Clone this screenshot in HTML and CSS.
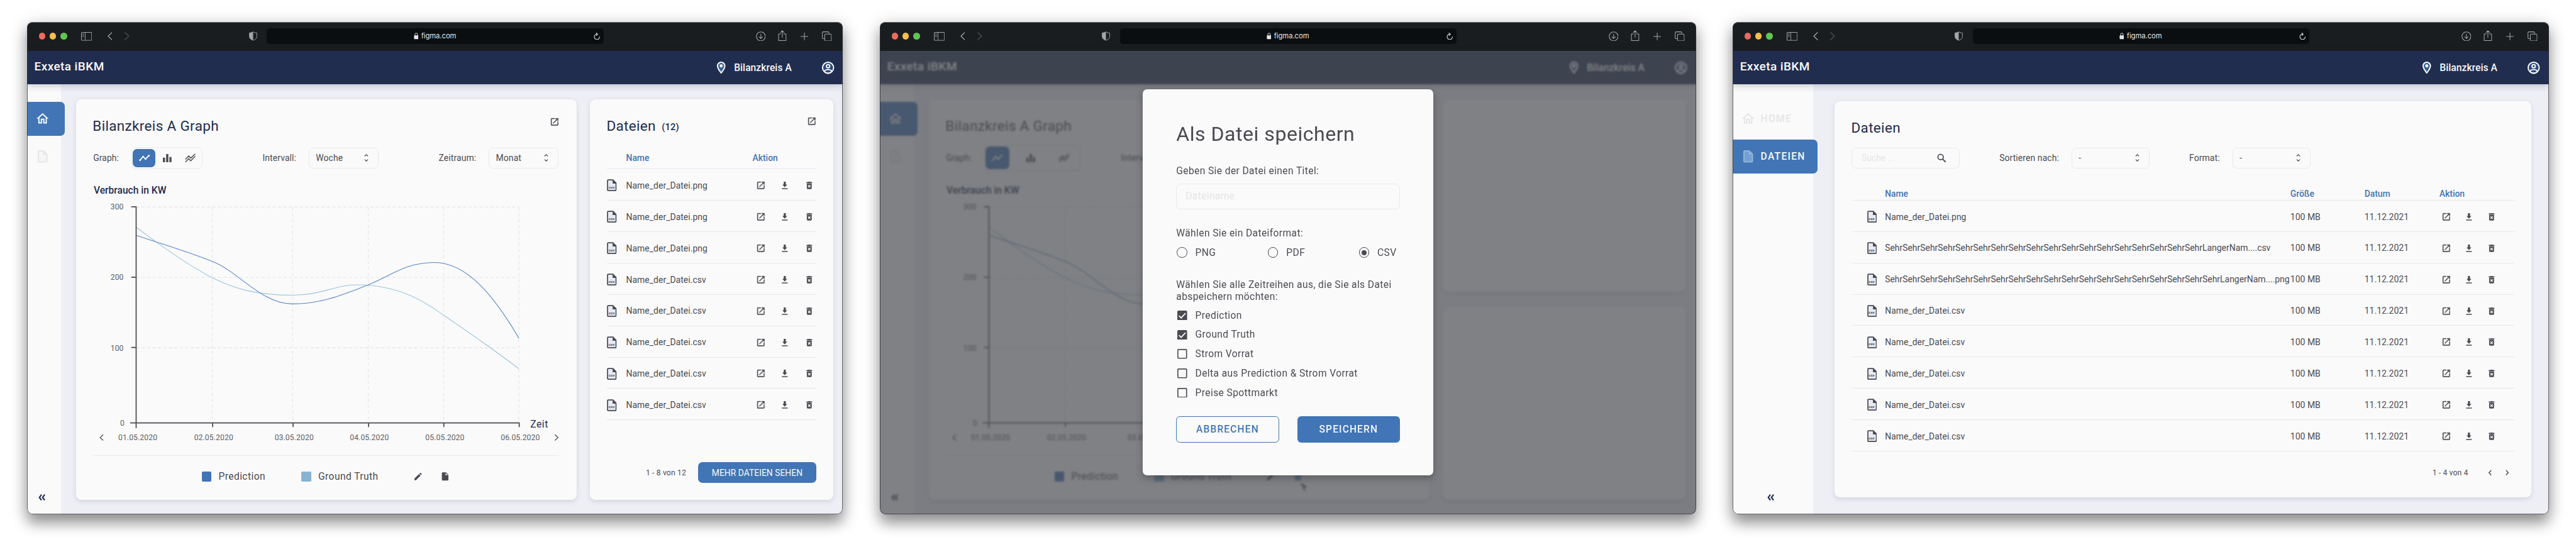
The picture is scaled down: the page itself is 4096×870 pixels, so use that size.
FILE: index.html
```html
<!DOCTYPE html>
<html lang="de">
<head>
<meta charset="utf-8">
<title>Exxeta iBKM</title>
<link rel="stylesheet" href="styles.css">
</head>
<body>
<svg class="sprite" aria-hidden="true">
  <symbol id="i-sidebar" viewBox="0 0 20 16"><rect x=".6" y=".6" width="18.8" height="14.8" rx="1.6" fill="none" stroke="currentColor" stroke-width="1.2"/><path d="M7.5 .6v14.8M2.4 3.6h3M2.4 6h3M2.4 8.4h3" fill="none" stroke="currentColor" stroke-width="1"/></symbol>
  <symbol id="i-back" viewBox="0 0 9 15"><path d="M8 .8L1.2 7.5L8 14.2" fill="none" stroke="currentColor" stroke-width="1.5" stroke-linecap="round" stroke-linejoin="round"/></symbol>
  <symbol id="i-fwd" viewBox="0 0 9 15"><path d="M1 .8L7.8 7.5L1 14.2" fill="none" stroke="currentColor" stroke-width="1.5" stroke-linecap="round" stroke-linejoin="round"/></symbol>
  <symbol id="i-prev" viewBox="0 0 8 11"><path d="M6 1L2 5.5L6 10" fill="none" stroke="currentColor" stroke-width="1.7"/></symbol>
  <symbol id="i-next" viewBox="0 0 8 11"><path d="M2 1L6 5.5L2 10" fill="none" stroke="currentColor" stroke-width="1.7"/></symbol>
  <symbol id="i-shield" viewBox="0 0 15 17"><path d="M7.5 .7C9.5 2 12 2.6 14.3 2.8V9.500C14.300 13 11 15.200 7.500 16.400C4 15.200 .7 13 .7 9.500V2.800C3 2.600 5.500 2 7.500 .7Z" fill="none" stroke="currentColor" stroke-width="1.1"/><path d="M7.500 .7C5.500 2 3 2.600 .7 2.800V9.500C.7 13 4 15.200 7.500 16.400Z" fill="currentColor"/></symbol>
  <symbol id="i-lock" viewBox="0 0 9 12"><rect x=".4" y="5" width="8.200" height="7" rx="1.300" fill="currentColor"/><path d="M2.200 5.500V3.200a2.300 2.400 0 0 1 4.600 0V5.500" fill="none" stroke="currentColor" stroke-width="1.100"/></symbol>
  <symbol id="i-reload" viewBox="0 0 12 13"><path d="M10.900 7.500A4.900 4.900 0 1 1 6.500 2.700M4.600 .5L7.200 2.700L5 5.200" fill="none" stroke="currentColor" stroke-width="1.200" stroke-linecap="round" stroke-linejoin="round"/></symbol>
  <symbol id="i-dl-circle" viewBox="0 0 18 18"><circle cx="9" cy="9" r="8.200" fill="none" stroke="currentColor" stroke-width="1.200"/><path d="M9 4.800V12.800M5.900 9.900L9 13L12.100 9.900" fill="none" stroke="currentColor" stroke-width="1.200" stroke-linecap="round"/></symbol>
  <symbol id="i-share" viewBox="0 0 16 20"><path d="M5 7H1.200V19H14.800V7H11M8 13V1.200M4.600 4.400L8 1L11.400 4.400" fill="none" stroke="currentColor" stroke-width="1.200" stroke-linecap="round" stroke-linejoin="round"/></symbol>
  <symbol id="i-plus" viewBox="0 0 14 14"><path d="M7 .5V13.500M.5 7H13.500" stroke="currentColor" stroke-width="1.200" stroke-linecap="round"/></symbol>
  <symbol id="i-copy" viewBox="0 0 18 18"><path d="M5 13.200H2.600A2 2 0 0 1 .7 11.200V2.700A2 2 0 0 1 2.700 .7H10.800A2 2 0 0 1 12.800 2.700V4.400" fill="none" stroke="currentColor" stroke-width="1.200"/><rect x="5" y="4.800" width="12.300" height="12.500" rx="2" fill="none" stroke="currentColor" stroke-width="1.200"/></symbol>
  <symbol id="i-pin" viewBox="0 0 24 24"><path d="M12 2C8.130 2 5 5.130 5 9c0 5.250 7 13 7 13s7-7.750 7-13c0-3.870-3.130-7-7-7z" fill="currentColor"/><path d="M12 4c2.760 0 5 2.240 5 5 0 2.880-2.880 7.190-5 9.880C9.920 16.210 7 11.850 7 9c0-2.760 2.240-5 5-5z" fill="#3f6491"/><circle cx="12" cy="9" r="2.500" fill="currentColor"/></symbol>
  <symbol id="i-user" viewBox="0 0 24 24"><circle cx="12" cy="12" r="9" fill="#2c4a7c" stroke="currentColor" stroke-width="2"/><circle cx="12" cy="9.500" r="2.700" fill="none" stroke="currentColor" stroke-width="2"/><path d="M5.500 17.800C7.500 15.500 10 15 12 15S16.500 15.500 18.500 17.800C17 20 14.500 21 12 21S7 20 5.500 17.800Z" fill="none" stroke="currentColor" stroke-width="1.900"/></symbol>
  <symbol id="i-home" viewBox="0 0 24 24"><path d="M12 3L2 12h3v8h6v-6h2v6h6v-8h3L12 3zm5 15h-2v-6H9v6H7v-7.810l5-4.500 5 4.500V18z" fill="currentColor"/></symbol>
  <symbol id="i-doc" viewBox="0 0 24 24"><path d="M14 2H6c-1.100 0-2 .9-2 2v16c0 1.100.9 2 2 2h12c1.100 0 2-.9 2-2V8l-6-6z" fill="currentColor"/><path d="M6 4h7v5h5v11H6z" fill="var(--doc-inner)"/></symbol>
  <symbol id="i-doc-solid" viewBox="0 0 24 24"><path d="M6 2c-1.100 0-1.990.9-1.990 2L4 20c0 1.100.89 2 1.990 2H18c1.100 0 2-.9 2-2V8l-6-6H6zm7 7V3.500L18.500 9H13z" fill="currentColor"/></symbol>
  <symbol id="i-collapse" viewBox="0 0 13 12"><path d="M5.800 .8L2 6L5.800 11.200M11.600 .8L7.800 6L11.600 11.200" fill="none" stroke="currentColor" stroke-width="2.500"/></symbol>
  <symbol id="i-open" viewBox="0 0 24 24"><path d="M19 19H5V5h7V3H5c-1.110 0-2 .9-2 2v14c0 1.100.89 2 2 2h14c1.100 0 2-.9 2-2v-7h-2v7zM14 3v2h3.590l-9.830 9.830 1.410 1.410L19 6.410V10h2V3h-7z" fill="currentColor" stroke="currentColor" stroke-width=".4"/></symbol>
  <symbol id="i-down" viewBox="0 0 24 24"><path d="M18 10h-3.500V3h-5v7H6l6 6.500 6-6.500zM5 19v2.200h14V19H5z" fill="currentColor"/></symbol>
  <symbol id="i-trash" viewBox="0 0 24 24"><path d="M6 19c0 1.100.9 2 2 2h8c1.100 0 2-.9 2-2V7H6v12zm2.460-7.120l1.410-1.410L12 12.590l2.120-2.120 1.410 1.410L13.410 14l2.120 2.120-1.410 1.410L12 15.410l-2.120 2.120-1.410-1.410L10.590 14l-2.130-2.120zM15.500 4l-1-1h-5l-1 1H5v2h14V4z" fill="currentColor"/></symbol>
  <symbol id="i-csv" viewBox="0 0 18 22"><path d="M2.500 1.200H11L16.800 7V19.500A1.300 1.300 0 0 1 15.500 20.800H2.500A1.300 1.300 0 0 1 1.200 19.500V2.500A1.300 1.300 0 0 1 2.500 1.200Z" fill="#e6eaf3" stroke="currentColor" stroke-width="2"/><path d="M10.500 1V8H17Z" fill="currentColor"/></symbol>
  <symbol id="i-line" viewBox="0 0 20 12"><path d="M2 10L7.500 3.500L12 8L18 1.800" fill="none" stroke="currentColor" stroke-width="2"/><circle cx="2" cy="10" r="1.700" fill="currentColor"/><circle cx="7.500" cy="3.500" r="1.500" fill="currentColor"/><circle cx="12" cy="8" r="1.500" fill="currentColor"/><circle cx="18" cy="1.900" r="1.700" fill="currentColor"/></symbol>
  <symbol id="i-bars" viewBox="0 0 16 15"><path d="M0 6.500H4V15H0ZM6 0H10V15H6ZM12 5.500H16V15H12Z" fill="currentColor"/></symbol>
  <symbol id="i-multi" viewBox="0 0 20 17"><path d="M1 11L7 4.800L10.800 8.500L19 .8M1 16L7 9.800L10.800 13.500L19 5.200" fill="none" stroke="currentColor" stroke-width="1.700"/></symbol>
  <symbol id="i-sort" viewBox="0 0 8 14"><path d="M1 4L4 1L7 4M1 10L4 13L7 10" fill="none" stroke="currentColor" stroke-width="1.400"/></symbol>
  <symbol id="i-pencil" viewBox="0 0 24 24"><path d="M3 17.250V21h3.750L17.810 9.940l-3.750-3.750L3 17.250zM20.710 7.040c.39-.39.39-1.020 0-1.410l-2.340-2.340c-.39-.39-1.020-.39-1.410 0l-1.830 1.830 3.750 3.750 1.830-1.830z" fill="currentColor"/></symbol>
  <symbol id="i-search" viewBox="0 0 17 17"><circle cx="6.500" cy="6.500" r="5" fill="none" stroke="currentColor" stroke-width="2"/><path d="M10.200 10.200L15.800 15.800" stroke="currentColor" stroke-width="2.300"/></symbol>
  <symbol id="i-hand" viewBox="0 0 12 15"><path d="M1 1L5 11L6.500 7.500L10 6.500ZM6 8L9 14" fill="#9b9ba0" stroke="currentColor" stroke-width="1.200"/></symbol>
</svg>

<main class="board">

  <!-- Dashboard -->
  <section class="window">
    <div class="chrome">
      <div class="lights"><i class="red"></i><i class="yellow"></i><i class="green"></i></div>
      <svg class="c-sidebar"><use href="#i-sidebar"/></svg>
      <svg class="c-back"><use href="#i-back"/></svg>
      <svg class="c-fwd"><use href="#i-fwd"/></svg>
      <svg class="c-shield"><use href="#i-shield"/></svg>
      <div class="url"><span class="host"><svg class="c-lock"><use href="#i-lock"/></svg>figma.com</span><svg class="c-reload"><use href="#i-reload"/></svg></div>
      <div class="tools"><svg class="t-dl"><use href="#i-dl-circle"/></svg><svg class="t-share"><use href="#i-share"/></svg><svg class="t-plus"><use href="#i-plus"/></svg><svg class="t-copy"><use href="#i-copy"/></svg></div>
    </div>
    <header class="appbar">
      <h1 class="brand">Exxeta iBKM</h1>
      <svg class="pin"><use href="#i-pin"/></svg><span class="circle-name">Bilanzkreis A</span>
      <svg class="user"><use href="#i-user"/></svg>
    </header>
    <div class="body">
      <nav class="side">
        <a class="item active"><svg><use href="#i-home"/></svg></a>
        <a class="item"><svg><use href="#i-doc"/></svg></a>
        <svg class="collapse"><use href="#i-collapse"/></svg>
      </nav>
      <div class="content">
        <article class="card graph">
          <div class="card-head"><h2>Bilanzkreis A Graph</h2><svg class="ic"><use href="#i-open"/></svg></div>
          <div class="controls">
            <div class="field"><label>Graph:</label><div class="toggle"><b><svg class="g-line"><use href="#i-line"/></svg></b><b><svg class="g-bars"><use href="#i-bars"/></svg></b><b><svg class="g-multi"><use href="#i-multi"/></svg></b></div></div>
            <div class="field"><label>Intervall:</label><div class="select">Woche<svg><use href="#i-sort"/></svg></div></div>
            <div class="field"><label>Zeitraum:</label><div class="select">Monat<svg><use href="#i-sort"/></svg></div></div>
          </div>
          <h3>Verbrauch in KW</h3>
          <svg class="chart" viewBox="171 366 854 456">
            <g class="grid">
              <path class="h" d="M250 380H952M250 509.500H952M250 638.500H952"/>
              <path class="v" d="M389.800 380V776M537.200 380V776M676 380V776M814.200 380V776M952.400 380V776"/>
            </g>
            <path class="truth" d="M250 417C300 455 345 487 389.800 510C430 530 470 542 537 542C590 542 615 523 655 523C740 523 790 562 814.200 578.700C850 603 905 641 952.400 677"/>
            <path class="prediction" d="M250 432C300 449 345 462 389.800 480C440 500 480 558 537 558C590 558 630 541 676 523C720 505 745 482 797 482C858 482 908 545 952.400 621"/>
            <g class="axis">
              <path d="M241 379.700H250M250 379V786M241 509H250M241 638H250M239 776.500H953.500M390.400 776V784M538 776V784M676.600 776V784M814.600 776V784M953 776V784"/>
            </g>
            <g class="ylab"><text x="227" y="385">300</text><text x="227" y="514.200">200</text><text x="227" y="643.700">100</text><text x="228.500" y="781.700">0</text></g>
            <text class="zeit" x="973.500" y="785.300">Zeit</text>
            <g class="xlab"><text x="253" y="807.700">01.05.2020</text><text x="392.300" y="807.700">02.05.2020</text><text x="540" y="807.700">03.05.2020</text><text x="678" y="807.700">04.05.2020</text><text x="816.600" y="807.700">05.05.2020</text><text x="955" y="807.700">06.05.2020</text></g>
            <path class="arrow" d="M189.500 798L184 803.300L189.500 808.600M1018.500 798L1024 803.300L1018.500 808.600"/>
          </svg>
          <div class="legend"><i class="dark"></i><span>Prediction</span><i class="light"></i><span>Ground Truth</span><svg class="ic"><use href="#i-pencil"/></svg><svg class="ic"><use href="#i-doc-solid"/></svg></div>
        </article>
        <article class="card files">
          <div class="card-head"><h2>Dateien <small>(12)</small></h2><svg class="ic"><use href="#i-open"/></svg></div>
          <div class="row th"><span></span><span>Name</span><span class="wide">Aktion</span></div>
          <div class="row"><div class="csv"><svg><use href="#i-csv"/></svg><em>csv</em></div><span>Name_der_Datei.png</span><svg class="ic"><use href="#i-open"/></svg><svg class="ic"><use href="#i-down"/></svg><svg class="ic"><use href="#i-trash"/></svg></div>
          <div class="row"><div class="csv"><svg><use href="#i-csv"/></svg><em>csv</em></div><span>Name_der_Datei.png</span><svg class="ic"><use href="#i-open"/></svg><svg class="ic"><use href="#i-down"/></svg><svg class="ic"><use href="#i-trash"/></svg></div>
          <div class="row"><div class="csv"><svg><use href="#i-csv"/></svg><em>csv</em></div><span>Name_der_Datei.png</span><svg class="ic"><use href="#i-open"/></svg><svg class="ic"><use href="#i-down"/></svg><svg class="ic"><use href="#i-trash"/></svg></div>
          <div class="row"><div class="csv"><svg><use href="#i-csv"/></svg><em>csv</em></div><span>Name_der_Datei.csv</span><svg class="ic"><use href="#i-open"/></svg><svg class="ic"><use href="#i-down"/></svg><svg class="ic"><use href="#i-trash"/></svg></div>
          <div class="row"><div class="csv"><svg><use href="#i-csv"/></svg><em>csv</em></div><span>Name_der_Datei.csv</span><svg class="ic"><use href="#i-open"/></svg><svg class="ic"><use href="#i-down"/></svg><svg class="ic"><use href="#i-trash"/></svg></div>
          <div class="row"><div class="csv"><svg><use href="#i-csv"/></svg><em>csv</em></div><span>Name_der_Datei.csv</span><svg class="ic"><use href="#i-open"/></svg><svg class="ic"><use href="#i-down"/></svg><svg class="ic"><use href="#i-trash"/></svg></div>
          <div class="row"><div class="csv"><svg><use href="#i-csv"/></svg><em>csv</em></div><span>Name_der_Datei.csv</span><svg class="ic"><use href="#i-open"/></svg><svg class="ic"><use href="#i-down"/></svg><svg class="ic"><use href="#i-trash"/></svg></div>
          <div class="row"><div class="csv"><svg><use href="#i-csv"/></svg><em>csv</em></div><span>Name_der_Datei.csv</span><svg class="ic"><use href="#i-open"/></svg><svg class="ic"><use href="#i-down"/></svg><svg class="ic"><use href="#i-trash"/></svg></div>
          <div class="more"><span>1 - 8 von 12</span><button>MEHR DATEIEN SEHEN</button></div>
        </article>
      </div>
    </div>
  </section>

  <!-- Save dialog -->
  <section class="window">
    <div class="chrome">
      <div class="lights"><i class="red"></i><i class="yellow"></i><i class="green"></i></div>
      <svg class="c-sidebar"><use href="#i-sidebar"/></svg>
      <svg class="c-back"><use href="#i-back"/></svg>
      <svg class="c-fwd"><use href="#i-fwd"/></svg>
      <svg class="c-shield"><use href="#i-shield"/></svg>
      <div class="url"><span class="host"><svg class="c-lock"><use href="#i-lock"/></svg>figma.com</span><svg class="c-reload"><use href="#i-reload"/></svg></div>
      <div class="tools"><svg class="t-dl"><use href="#i-dl-circle"/></svg><svg class="t-share"><use href="#i-share"/></svg><svg class="t-plus"><use href="#i-plus"/></svg><svg class="t-copy"><use href="#i-copy"/></svg></div>
    </div>
    <header class="appbar">
      <h1 class="brand">Exxeta iBKM</h1>
      <svg class="pin"><use href="#i-pin"/></svg><span class="circle-name">Bilanzkreis A</span>
      <svg class="user"><use href="#i-user"/></svg>
    </header>
    <div class="body">
      <nav class="side">
        <a class="item active"><svg><use href="#i-home"/></svg></a>
        <a class="item"><svg><use href="#i-doc"/></svg></a>
        <svg class="collapse"><use href="#i-collapse"/></svg>
      </nav>
      <div class="content">
        <article class="card graph behind">
          <div class="card-head"><h2>Bilanzkreis A Graph</h2></div>
          <div class="controls">
            <div class="field"><label>Graph:</label><div class="toggle large"><b><svg class="g-line"><use href="#i-line"/></svg></b><b><svg class="g-bars"><use href="#i-bars"/></svg></b><b><svg class="g-multi"><use href="#i-multi"/></svg></b></div></div>
            <div class="field"><label>Interv</label></div>
          </div>
          <h3>Verbrauch in KW</h3>
          <svg class="chart" viewBox="171 366 854 456">
            <g class="grid">
              <path class="h" d="M250 380H952M250 509.500H952M250 638.500H952"/>
              <path class="v" d="M389.800 380V776M537.200 380V776"/>
            </g>
            <path class="truth" d="M250 417C300 455 345 487 389.800 510C430 530 470 542 537 542"/>
            <path class="prediction" d="M250 432C300 449 345 462 389.800 480C440 500 480 558 537 558"/>
            <g class="axis">
              <path d="M241 379.700H250M250 379V786M241 509H250M241 638H250M239 776.500H953.500M390.400 776V784M538 776V784"/>
            </g>
            <g class="ylab"><text x="227" y="385">300</text><text x="227" y="514.200">200</text><text x="227" y="643.700">100</text><text x="228.500" y="781.700">0</text></g>
            <g class="xlab"><text x="253" y="807.700">01.05.2020</text><text x="392.300" y="807.700">02.05.2020</text><text x="540" y="807.700">03.05.2020</text></g>
            <path class="arrow" d="M189.500 798L184 803.300L189.500 808.600"/>
          </svg>
          <div class="legend"><i class="dark"></i><span>Prediction</span><i class="light"></i><span>Ground Truth</span><svg class="ic"><use href="#i-pencil"/></svg><svg class="ic picked"><use href="#i-doc-solid"/></svg><svg class="hand"><use href="#i-hand"/></svg></div>
        </article>
        <div class="stack"><article class="card"></article><article class="card"></article></div>
      </div>
    </div>
    <div class="overlay"></div>
    <form class="dialog">
      <h2>Als Datei speichern</h2>
      <p class="l1">Geben Sie der Datei einen Titel:</p>
      <div class="input">Dateiname</div>
      <p class="l2">Wählen Sie ein Dateiformat:</p>
      <div class="radios"><span><i></i>PNG</span><span><i></i>PDF</span><span><i class="on"></i>CSV</span></div>
      <p class="l3">Wählen Sie alle Zeitreihen aus, die Sie als Datei<br>abspeichern möchten:</p>
      <ul>
        <li><svg class="box" viewBox="0 0 18 18"><rect width="18" height="18" rx="2" fill="currentColor"/><path d="M3 9.500L7 13.500L15 4.800" fill="none" stroke="#fafafa" stroke-width="2"/></svg>Prediction</li>
        <li><svg class="box" viewBox="0 0 18 18"><rect width="18" height="18" rx="2" fill="currentColor"/><path d="M3 9.500L7 13.500L15 4.800" fill="none" stroke="#fafafa" stroke-width="2"/></svg>Ground Truth</li>
        <li><svg class="box" viewBox="0 0 18 18"><rect x="1" y="1" width="16" height="16" rx="1" fill="none" stroke="currentColor" stroke-width="1.900"/></svg>Strom Vorrat</li>
        <li><svg class="box" viewBox="0 0 18 18"><rect x="1" y="1" width="16" height="16" rx="1" fill="none" stroke="currentColor" stroke-width="1.900"/></svg>Delta aus Prediction &amp; Strom Vorrat</li>
        <li><svg class="box" viewBox="0 0 18 18"><rect x="1" y="1" width="16" height="16" rx="1" fill="none" stroke="currentColor" stroke-width="1.900"/></svg>Preise Spottmarkt</li>
      </ul>
      <div class="actions"><button type="button" class="ghost">ABBRECHEN</button><button type="button">SPEICHERN</button></div>
    </form>
  </section>

  <!-- File list -->
  <section class="window">
    <div class="chrome">
      <div class="lights"><i class="red"></i><i class="yellow"></i><i class="green"></i></div>
      <svg class="c-sidebar"><use href="#i-sidebar"/></svg>
      <svg class="c-back"><use href="#i-back"/></svg>
      <svg class="c-fwd"><use href="#i-fwd"/></svg>
      <svg class="c-shield"><use href="#i-shield"/></svg>
      <div class="url"><span class="host"><svg class="c-lock"><use href="#i-lock"/></svg>figma.com</span><svg class="c-reload"><use href="#i-reload"/></svg></div>
      <div class="tools"><svg class="t-dl"><use href="#i-dl-circle"/></svg><svg class="t-share"><use href="#i-share"/></svg><svg class="t-plus"><use href="#i-plus"/></svg><svg class="t-copy"><use href="#i-copy"/></svg></div>
    </div>
    <header class="appbar">
      <h1 class="brand">Exxeta iBKM</h1>
      <svg class="pin"><use href="#i-pin"/></svg><span class="circle-name">Bilanzkreis A</span>
      <svg class="user"><use href="#i-user"/></svg>
    </header>
    <div class="body">
      <nav class="side open">
        <a class="item"><svg><use href="#i-home"/></svg>HOME</a>
        <a class="item active"><svg class="doc"><use href="#i-doc"/></svg>DATEIEN</a>
        <svg class="collapse"><use href="#i-collapse"/></svg>
      </nav>
      <div class="content list">
        <article class="card table">
          <div class="card-head"><h2>Dateien</h2></div>
          <div class="filters">
            <div class="search">Suche ...<svg><use href="#i-search"/></svg></div>
            <div class="field"><label>Sortieren nach:</label><div class="select">-<svg><use href="#i-sort"/></svg></div></div>
            <div class="field"><label>Format:</label><div class="select">-<svg><use href="#i-sort"/></svg></div></div>
          </div>
          <div class="row th"><span></span><span>Name</span><span>Größe</span><span>Datum</span><span class="wide">Aktion</span></div>
          <div class="row"><div class="csv"><svg><use href="#i-csv"/></svg><em>csv</em></div><span>Name_der_Datei.png</span><span>100 MB</span><span>11.12.2021</span><svg class="ic"><use href="#i-open"/></svg><svg class="ic"><use href="#i-down"/></svg><svg class="ic"><use href="#i-trash"/></svg></div>
          <div class="row"><div class="csv"><svg><use href="#i-csv"/></svg><em>csv</em></div><span class="long">SehrSehrSehrSehrSehrSehrSehrSehrSehrSehrSehrSehrSehrSehrSehrSehrSehrSehrLangerNam....csv</span><span>100 MB</span><span>11.12.2021</span><svg class="ic"><use href="#i-open"/></svg><svg class="ic"><use href="#i-down"/></svg><svg class="ic"><use href="#i-trash"/></svg></div>
          <div class="row"><div class="csv"><svg><use href="#i-csv"/></svg><em>csv</em></div><span class="long">SehrSehrSehrSehrSehrSehrSehrSehrSehrSehrSehrSehrSehrSehrSehrSehrSehrSehrSehrLangerNam....png</span><span>100 MB</span><span>11.12.2021</span><svg class="ic"><use href="#i-open"/></svg><svg class="ic"><use href="#i-down"/></svg><svg class="ic"><use href="#i-trash"/></svg></div>
          <div class="row"><div class="csv"><svg><use href="#i-csv"/></svg><em>csv</em></div><span>Name_der_Datei.csv</span><span>100 MB</span><span>11.12.2021</span><svg class="ic"><use href="#i-open"/></svg><svg class="ic"><use href="#i-down"/></svg><svg class="ic"><use href="#i-trash"/></svg></div>
          <div class="row"><div class="csv"><svg><use href="#i-csv"/></svg><em>csv</em></div><span>Name_der_Datei.csv</span><span>100 MB</span><span>11.12.2021</span><svg class="ic"><use href="#i-open"/></svg><svg class="ic"><use href="#i-down"/></svg><svg class="ic"><use href="#i-trash"/></svg></div>
          <div class="row"><div class="csv"><svg><use href="#i-csv"/></svg><em>csv</em></div><span>Name_der_Datei.csv</span><span>100 MB</span><span>11.12.2021</span><svg class="ic"><use href="#i-open"/></svg><svg class="ic"><use href="#i-down"/></svg><svg class="ic"><use href="#i-trash"/></svg></div>
          <div class="row"><div class="csv"><svg><use href="#i-csv"/></svg><em>csv</em></div><span>Name_der_Datei.csv</span><span>100 MB</span><span>11.12.2021</span><svg class="ic"><use href="#i-open"/></svg><svg class="ic"><use href="#i-down"/></svg><svg class="ic"><use href="#i-trash"/></svg></div>
          <div class="row"><div class="csv"><svg><use href="#i-csv"/></svg><em>csv</em></div><span>Name_der_Datei.csv</span><span>100 MB</span><span>11.12.2021</span><svg class="ic"><use href="#i-open"/></svg><svg class="ic"><use href="#i-down"/></svg><svg class="ic"><use href="#i-trash"/></svg></div>
          <div class="pager"><span>1 - 4 von 4</span><svg><use href="#i-prev"/></svg><svg><use href="#i-next"/></svg></div>
        </article>
      </div>
    </div>
  </section>
</main>
</body>
</html>
```
FILE: styles.css
```css
* { box-sizing: border-box; margin: 0; padding: 0; }
html, body { background: #fff; overflow: hidden; }
body { font-family: Roboto, "Liberation Sans", sans-serif; color: #4a4b52; }
svg { display: block; flex: none; }
i, em { font-style: normal; }
.sprite { position: absolute; width: 0; height: 0; }

.board {
  --blue: #4175b5;
  --navy: #212d4f;
  --paper: #fafafa;
  --line: #e7e8ee;
  --doc-inner: #f5f5f5;
  zoom: .8665;
  width: 4727px;
  height: 1004px;
  padding: 40px 50px 60px;
  display: flex;
  gap: 68px;
}

.window {
  position: relative;
  width: 1497px;
  height: 904px;
  flex: none;
  display: flex;
  flex-direction: column;
  border-radius: 10px;
  overflow: hidden;
  background: #eeeff5;
  box-shadow: 0 16px 24px rgba(0,0,0,.36), 0 5px 36px rgba(0,0,0,.17);
}
.window::after {
  content: "";
  position: absolute;
  inset: 0;
  border: 1px solid rgba(50,52,60,.75);
  border-top-color: #6a6d70;
  border-radius: 10px;
}

/* browser bar */
.chrome { height: 53px; flex: none; background: #1a1d1f; color: #a3a5a6; display: flex; align-items: center; padding-left: 21px; }
.lights { display: flex; gap: 8px; }
.lights i { width: 12px; height: 12px; border-radius: 50%; }
.red { background: #ec6a5e; }
.yellow { background: #f4bf4f; }
.green { background: #61c554; }
.c-sidebar { width: 20px; height: 16px; margin-left: 26px; }
.c-back { width: 9px; height: 15px; margin-left: 28px; }
.c-fwd { width: 9px; height: 15px; margin-left: 23px; color: #4d5052; }
.c-shield { width: 15px; height: 17px; margin-left: 219px; }
.url { width: 618px; height: 28px; margin-left: 18px; border-radius: 6px; background: #0b0e10; color: #e3e4e5; display: flex; align-items: center; }
.host { display: flex; align-items: center; width: 600px; padding-left: 269px; font: 13px/28px Inter, Roboto, sans-serif; letter-spacing: -.06px; }
.c-lock { width: 9px; height: 12px; margin-right: 5px; }
.c-reload { width: 12px; height: 13px; }
.tools { display: flex; align-items: center; margin-left: 279px; }
.t-dl { width: 18px; height: 18px; }
.t-share { width: 16px; height: 20px; margin: 0 25px 3px 23px; }
.t-plus { width: 14px; height: 14px; }
.t-copy { width: 18px; height: 18px; margin-left: 26px; }

/* app header */
.appbar { height: 62px; flex: none; background: var(--navy); color: #fafafa; display: flex; align-items: center; padding-left: 13px; position: relative; box-shadow: 0 3px 12px rgba(33,45,79,.22); }
.brand { font-size: 22px; font-weight: 500; letter-spacing: .45px; width: 1247px; line-height: 58px; padding-bottom: 2px; }
.pin { width: 27px; height: 27px; }
.circle-name { font-size: 18px; font-weight: 500; letter-spacing: .09px; width: 150px; margin-left: 10px; padding-top: 1px; }
.user { width: 27px; height: 27px; margin-left: 9px; }

/* body and navigation */
.body { flex: 1; display: flex; min-height: 0; }
.side { width: 62px; background: var(--paper); padding: 32px 0 25px; display: flex; flex-direction: column; color: #e5e5e6; }
.item { height: 62px; margin-bottom: 7px; padding-left: 15px; display: flex; align-items: center; font-size: 18px; font-weight: 500; letter-spacing: 1.5px; }
.item svg { width: 27px; height: 27px; }
.item.active { width: 69px; background: var(--blue); color: #fafafa; border-radius: 0 8px 8px 0; }
.collapse { width: 13px; height: 12px; margin: auto 0 0 20px; color: var(--navy); }
.side.open { width: 147px; }
.open .item { padding-left: 14px; }
.open .item svg { margin-right: 10px; }
.open .item.active { width: 155px; }
.open .doc { color: #8cb8d6; --doc-inner: #759fd2; }
.open .collapse { margin-left: 63px; }

/* cards */
.content { flex: 1; display: flex; gap: 25px; padding: 27px 18px 27px 28px; }
.content.list { padding: 31px 32px 31px 40px; }
.card { background: var(--paper); border-radius: 10px; box-shadow: 0 3px 9px rgba(60,65,95,.15); }
.graph { width: 918px; padding: 29px 33px 0 31px; }
.files { width: 446px; padding: 29px 31px 0 31px; }
.table { width: 1278px; padding: 29px 31px 0 31px; }
.stack { display: flex; flex-direction: column; gap: 27px; width: 446px; }
.stack .card { flex: 1; }
.card-head { height: 40px; display: flex; justify-content: space-between; }
h2 { font-size: 26px; font-weight: 400; letter-spacing: .38px; line-height: 40px; color: var(--navy); margin-left: -1px; }
h2 small { font-size: 17px; font-weight: 500; letter-spacing: .2px; position: relative; top: -1px; margin-left: 4px; }
.ic { width: 18px; height: 18px; }
.card-head .ic { margin: 4px -2px 0 0; }
.files .card-head .ic { margin-top: 2px; margin-right: -1px; }

.field { display: flex; align-items: center; font-size: 16px; letter-spacing: .15px; }
.field label { margin-right: 23px; }
.controls { display: flex; justify-content: space-between; align-items: center; height: 40px; margin-top: 19px; }
.select { width: 128px; height: 38px; border: 1.3px solid #e9e9ea; border-radius: 7px; padding: 0 17px 0 12px; display: flex; align-items: center; justify-content: space-between; }
.select svg { width: 8px; height: 14px; }
.toggle { width: 130px; height: 40px; border: 1.3px solid #e9e9ea; border-radius: 9px; padding-left: 1px; display: flex; align-items: center; color: #4a4b52; }
.toggle b { width: 43px; height: 34px; border-radius: 8px; display: flex; align-items: center; justify-content: center; }
.toggle b:first-child { background: var(--blue); color: #fff; }
.g-line { width: 20px; height: 12px; }
.g-bars { width: 16px; height: 15px; }
.g-multi { width: 20px; height: 17px; }
.behind h2 { color: #4a4b52; }
.behind .controls { justify-content: flex-start; gap: 75px; }
.toggle.large { width: 176px; height: 50px; gap: 17px; margin: -5px 0; }
.toggle.large b { width: 44px; height: 42px; }

h3 { font-size: 18px; font-weight: 500; color: var(--navy); line-height: 22px; height: 22px; margin: 29px 0 0 1px; }

.chart { width: 854px; height: 456px; margin-top: 5px; font-size: 14px; }
.grid path { fill: none; stroke: #e4e4e5; stroke-width: 1.2; }
.grid .h { stroke-dasharray: 6 4; }
.grid .v { stroke-dasharray: 6 5; }
.axis path { fill: none; stroke: #4a4b52; stroke-width: 2; }
.truth, .prediction { fill: none; stroke-width: 1.3; }
.truth { stroke: #9cc4dd; }
.prediction { stroke: #5585c4; }
.arrow { fill: none; stroke: #4a4b52; stroke-width: 1.5; }
.chart text { fill: #5c5d63; letter-spacing: .15px; }
.ylab { text-anchor: end; }
.xlab { text-anchor: middle; }
.chart .zeit { font-size: 18px; fill: var(--navy); letter-spacing: .6px; }

.legend { height: 77px; border-top: 2px solid #ececec; margin-top: 14px; padding-left: 199px; display: flex; align-items: center; font-size: 18px; letter-spacing: .5px; position: relative; }
.legend i { width: 18px; height: 18px; border-radius: 2px; margin-right: 13px; }
.legend span { width: 152px; }
.legend span + i + span { width: 174px; }
.legend .ic + .ic { margin-left: 32px; }
.dark { background: var(--blue); }
.light { background: #88b4d1; }
.picked { color: #6fa9cf; }
.hand { position: absolute; left: 651px; top: 49px; width: 13px; height: 16px; }

/* file rows */
.row { display: grid; align-items: center; height: 57.6px; padding-top: 3px; border-bottom: 1.3px solid var(--line); font-size: 16px; letter-spacing: .08px; white-space: nowrap; }
.files .row { grid-template-columns: 35px 238px 44.4px 44.4px 18px; }
.table .row { grid-template-columns: 33px 744px 136px 141.5px 41.6px 41.6px 18px; padding-left: 28px; }
.row .long { letter-spacing: .04px; }
.row.th { height: 41px; color: var(--blue); font-weight: 500; letter-spacing: 0; }
.files .th { height: 40.600px; margin-top: 19px; padding-top: 0; }
.files .th .wide { margin-left: -6px; }
.table .th { height: 28px; margin-top: 31px; }
.table .th .wide { margin-left: -4px; }
.wide { grid-column-end: span 3; }
.csv { position: relative; width: 18px; height: 22px; }
.csv svg { width: 18px; height: 22px; }
.csv em { position: absolute; left: 3px; top: 10px; font: 700 7px/9px Roboto, sans-serif; letter-spacing: .1px; }

.more { display: flex; align-items: center; justify-content: flex-end; margin-top: 77px; font-size: 14px; letter-spacing: .18px; }
button { font-family: inherit; border: 0; background: var(--blue); color: #f5f7fa; border-radius: 8px; white-space: nowrap; }
.more button { width: 217px; height: 38px; margin-left: 22px; font-size: 16px; letter-spacing: .03px; }

/* filters and pager */
.filters { display: flex; align-items: center; height: 38px; margin-top: 16px; font-size: 16px; }
.search { width: 198px; height: 38px; border: 1.300px solid #e9e9ea; border-radius: 8px; padding: 0 23px 0 17px; color: #e6e6e8; display: flex; align-items: center; justify-content: space-between; }
.search svg { width: 17px; height: 17px; color: #4a4b52; }
.filters .field { margin-left: 73px; }
.filters .select { width: 143px; }
.pager { display: flex; align-items: center; justify-content: flex-end; margin-top: 31px; font-size: 14px; letter-spacing: .15px; padding-right: 9px; }
.pager svg { width: 8px; height: 11px; margin-left: 24px; }
.pager span { margin-right: 12px; }

/* dialog */
.overlay { position: absolute; left: 0; right: 0; top: 53px; bottom: 0; background: rgba(75,77,81,.7); backdrop-filter: blur(1.800px); }
.dialog { position: absolute; left: 482px; top: 124px; width: 533px; height: 709px; background: var(--paper); border-radius: 8px; padding: 58px 61px 0 61.500px; box-shadow: 0 5px 14px rgba(30,32,40,.35); font-size: 18px; letter-spacing: .45px; z-index: 1; }
.dialog h2 { font-size: 37px; letter-spacing: .6px; line-height: 50px; color: #4a4b52; margin-left: 0; }
.dialog p { line-height: 21.300px; white-space: nowrap; }
.l1 { margin-top: 31px; }
.input { height: 47px; margin-top: 13px; border: 1.300px solid #e9e9ea; border-radius: 8px; padding-left: 16px; line-height: 45px; color: #e4e4e6; }
.l2 { margin-top: 34px; }
.radios { display: grid; grid-template-columns: 167px 167px auto; margin-top: 13px; height: 22px; }
.radios span { display: flex; align-items: center; }
.radios i { width: 19px; height: 19px; border: 2px solid #4a4b52; border-radius: 50%; margin: 0 15px 0 1px; flex: none; display: grid; place-items: center; }
.radios .on::before { content: ""; width: 9.500px; height: 9.500px; border-radius: 50%; background: #4a4b52; }
.l3 { margin-top: 38px; }
.dialog ul { list-style: none; margin-top: 6px; }
.dialog li { height: 35.500px; display: flex; align-items: center; white-space: nowrap; }
.box { width: 18px; height: 18px; margin: 0 15px 0 2px; }
.actions { display: flex; justify-content: space-between; margin-top: 26px; }
.actions button { width: 188.500px; height: 47.500px; font-size: 18px; font-weight: 500; letter-spacing: 1.300px; border-radius: 7px; }
.actions .ghost { background: none; border: 2px solid var(--blue); color: var(--blue); }
```
